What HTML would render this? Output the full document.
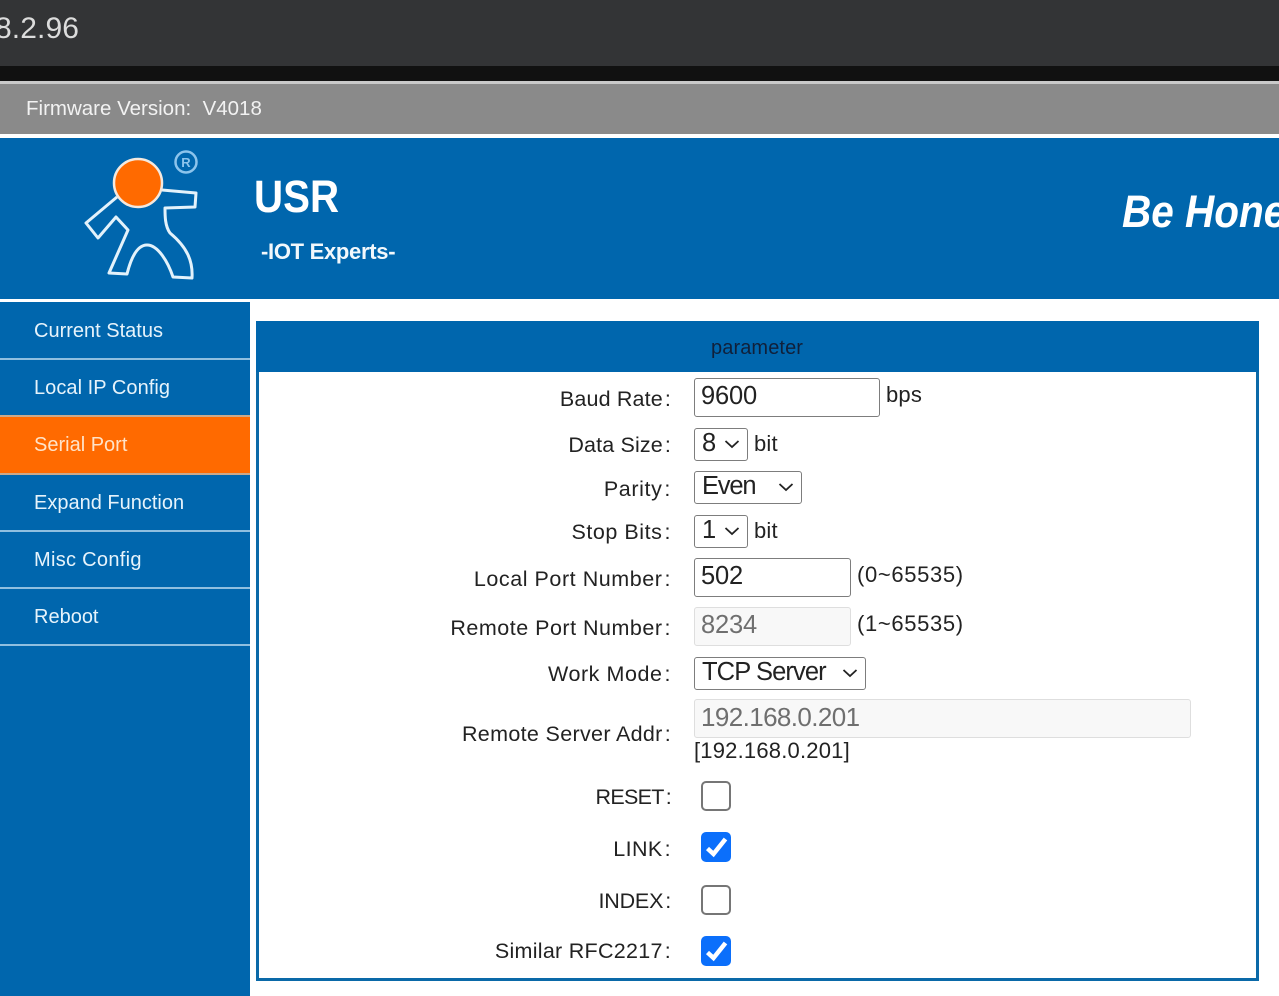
<!DOCTYPE html>
<html>
<head>
<meta charset="utf-8">
<style>
html,body{margin:0;padding:0;background:#fff;overflow:hidden}
body{position:relative;width:1279px;height:996px;overflow:hidden;font-family:"Liberation Sans",Arial,sans-serif;color:#1a1a1a}
div,span{position:absolute;box-sizing:border-box;white-space:nowrap}
i{font-style:normal;margin-left:2px}
.nav{left:34px;font-size:20px;line-height:24px;color:#e6f3fb;letter-spacing:0}
.ln{left:0;width:250px;height:2px;background:#8fbfe0}
.lb{right:608px;font-size:21.5px;line-height:26px;color:#222;letter-spacing:.15px}
.t{font-size:22px;line-height:26px;color:#222;letter-spacing:.2px}
.in{left:694px;height:39px;border:1.5px solid #7d7d7d;border-radius:3px;background:#fff;font-size:25.5px;line-height:35px;padding-left:6px;color:#222;letter-spacing:-.2px}
.dis{border-color:#dedede;background:#f8f8f8;color:#6f6f6f}
.sel{left:694px;height:33px;border:1.5px solid #7d7d7d;border-radius:3px;background:#fff;font-size:25.5px;line-height:29px;padding-left:7px;color:#222;letter-spacing:.2px}
.sel svg{position:absolute;top:10px}
.cb{left:701px;width:30px;height:30px;border:2.5px solid #767676;border-radius:5px;background:#fff}
.cb.on{background:#0b6ffb;border:0}
.cb svg{position:absolute;left:0;top:0}
</style>
</head>
<body>
<div style="left:0;top:0;width:1279px;height:66px;background:#333436"></div>
<div style="left:-5px;top:11px;font-size:30px;line-height:36px;color:#dcdcdc;letter-spacing:.1px">8.2.96</div>
<div style="left:0;top:66px;width:1279px;height:15px;background:#111"></div>
<div style="left:0;top:81px;width:1279px;height:3px;background:#c9c9c9"></div>
<div style="left:0;top:84px;width:1279px;height:50px;background:#8a8a8a"></div>
<div style="left:26px;top:96px;font-size:20.5px;line-height:25px;color:#f2f2f2">Firmware Version:&nbsp; V4018</div>
<div style="left:0;top:138px;width:1279px;height:161px;background:#0066ad"></div>

<svg style="position:absolute;left:0;top:138px" width="260" height="161" viewBox="0 138 260 161">
<path d="M117 197 L86 223 L98 238 L116 217 L128 230 L109 273 L127 274 C131 258 137 245 147 245 C158 245 168 262 173 277 L192 278 C193 262 188 248 170 233 C165 226 165 216 165 208 L195 207 L196 193 L162 190" fill="none" stroke="#e3f2fb" stroke-width="3" stroke-linejoin="round"/>
<circle cx="138" cy="183" r="24" fill="#ff6a00" stroke="#f4e9df" stroke-width="2.5"/>
<circle cx="186" cy="162" r="10.5" fill="none" stroke="#8cc4ec" stroke-width="2.5"/>
<text x="186" y="167" font-size="13" font-weight="700" text-anchor="middle" fill="#8cc4ec" font-family="Liberation Sans">R</text>
</svg>

<div style="left:254px;top:171px;font-size:45px;line-height:52px;font-weight:700;color:#fff;transform:scaleX(.895);transform-origin:left top">USR</div>
<div style="left:261px;top:239px;font-size:22px;line-height:26px;font-weight:700;color:#f2f8fc;letter-spacing:-.3px">-IOT Experts-</div>
<div style="left:1122px;top:186px;width:157px;height:52px;overflow:hidden"><span style="left:0;top:0;font-size:45px;line-height:52px;font-weight:700;font-style:italic;color:#fff;transform:scaleX(.9);transform-origin:left top">Be Hone</span></div>

<div style="left:0;top:302px;width:250px;height:694px;background:#0066ad"></div>
<div style="left:0;top:417px;width:250px;height:57px;background:#ff6a00"></div>
<div class="ln" style="top:358px"></div>
<div class="ln" style="top:415px;background:#c9a98c"></div>
<div class="ln" style="top:473px;background:#c9a98c"></div>
<div class="ln" style="top:530px"></div>
<div class="ln" style="top:587px"></div>
<div class="ln" style="top:644px"></div>
<div class="nav" style="top:319px">Current Status</div>
<div class="nav" style="top:376px;letter-spacing:.05px">Local IP Config</div>
<div class="nav" style="top:433px;color:#ffe3c8">Serial Port</div>
<div class="nav" style="top:491px">Expand Function</div>
<div class="nav" style="top:548px;letter-spacing:.3px">Misc Config</div>
<div class="nav" style="top:605px">Reboot</div>

<div style="left:256px;top:321px;width:1003px;height:660px;border:3px solid #0a69a8;background:#fff"></div>
<div style="left:256px;top:321px;width:1003px;height:51px;background:#0066ad"></div>
<div style="left:711px;top:336px;font-size:20px;line-height:24px;color:#10203a;letter-spacing:.1px">parameter</div>

<div class="lb" style="top:386px">Baud Rate<i>:</i></div>
<div class="lb" style="top:432px">Data Size<i>:</i></div>
<div class="lb" style="top:476px;letter-spacing:.6px">Parity<i>:</i></div>
<div class="lb" style="top:519px;letter-spacing:.55px">Stop Bits<i>:</i></div>
<div class="lb" style="top:566px;letter-spacing:.55px">Local Port Number<i>:</i></div>
<div class="lb" style="top:615px;letter-spacing:.5px">Remote Port Number<i>:</i></div>
<div class="lb" style="top:661px;letter-spacing:.55px">Work Mode<i>:</i></div>
<div class="lb" style="top:721px;letter-spacing:.33px">Remote Server Addr<i>:</i></div>
<div class="lb" style="top:784px;letter-spacing:-.7px">RESET<i>:</i></div>
<div class="lb" style="top:836px;letter-spacing:.4px">LINK<i>:</i></div>
<div class="lb" style="top:888px;letter-spacing:-.2px">INDEX<i>:</i></div>
<div class="lb" style="top:938px;letter-spacing:.28px">Similar RFC2217<i>:</i></div>

<div class="in" style="top:378px;width:186px">9600</div>
<div class="t" style="left:886px;top:382px">bps</div>
<div class="sel" style="top:428px;width:54px">8<svg style="left:29px" width="16" height="10"><path d="M1.5 2 L8 8 L14.5 2" fill="none" stroke="#222" stroke-width="1.8"/></svg></div>
<div class="t" style="left:754px;top:431px">bit</div>
<div class="sel" style="top:471px;width:108px;letter-spacing:-1.2px">Even<svg style="left:83px" width="16" height="10"><path d="M1.5 2 L8 8 L14.5 2" fill="none" stroke="#222" stroke-width="1.8"/></svg></div>
<div class="sel" style="top:515px;width:54px">1<svg style="left:29px" width="16" height="10"><path d="M1.5 2 L8 8 L14.5 2" fill="none" stroke="#222" stroke-width="1.8"/></svg></div>
<div class="t" style="left:754px;top:518px">bit</div>
<div class="in" style="top:558px;width:157px">502</div>
<div class="t" style="left:857px;top:562px;letter-spacing:.65px">(0~65535)</div>
<div class="in dis" style="top:607px;width:157px">8234</div>
<div class="t" style="left:857px;top:611px;letter-spacing:.65px">(1~65535)</div>
<div class="sel" style="top:657px;width:172px;letter-spacing:-.9px">TCP Server<svg style="left:147px" width="16" height="10"><path d="M1.5 2 L8 8 L14.5 2" fill="none" stroke="#222" stroke-width="1.8"/></svg></div>
<div class="in dis" style="top:699px;width:497px;font-size:26px;letter-spacing:-.6px">192.168.0.201</div>
<div class="t" style="left:694px;top:738px">[192.168.0.201]</div>

<div class="cb" style="top:781px"></div>
<div class="cb on" style="top:832px"><svg width="30" height="30"><path d="M6.5 16.5 L12.5 22 L24.5 7" fill="none" stroke="#fff" stroke-width="4.5"/></svg></div>
<div class="cb" style="top:885px"></div>
<div class="cb on" style="top:936px"><svg width="30" height="30"><path d="M6.5 16.5 L12.5 22 L24.5 7" fill="none" stroke="#fff" stroke-width="4.5"/></svg></div>
</body>
</html>
